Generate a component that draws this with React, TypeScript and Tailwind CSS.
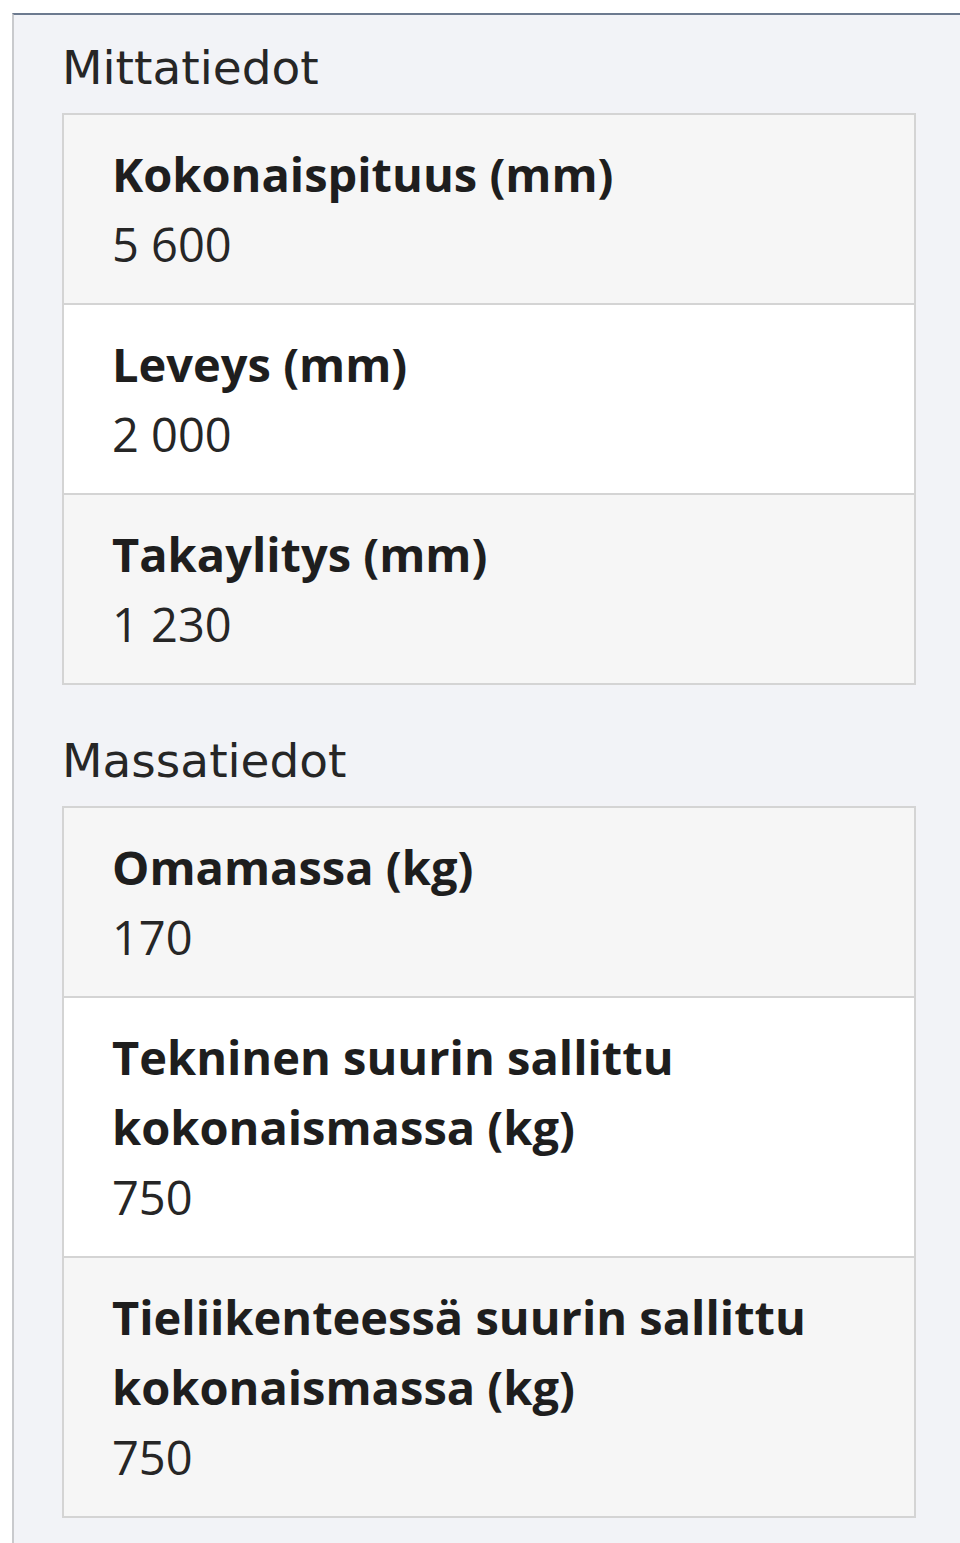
const sections = [
  {
    title: 'Mittatiedot',
    rows: [
      { label: 'Kokonaispituus (mm)', value: '5 600' },
      { label: 'Leveys (mm)', value: '2 000' },
      { label: 'Takaylitys (mm)', value: '1 230' },
    ],
  },
  {
    title: 'Massatiedot',
    rows: [
      { label: 'Omamassa (kg)', value: '170' },
      { label: 'Tekninen suurin sallittu kokonaismassa (kg)', value: '750' },
      { label: 'Tieliikenteessä suurin sallittu kokonaismassa (kg)', value: '750' },
    ],
  },
];

export default function App() {
  return (
    <div className="w-[960px] h-[1543px] overflow-hidden bg-white pt-[13px]">
      <div className="h-full ml-[12px] bg-[#f2f3f7] border-t-2 border-l-2 border-t-[#6c7a8f] border-l-[#c9cacd] pl-[48px] pr-[44px] pt-[23px] font-['Open_Sans',sans-serif] text-[#222]">
        {sections.map((section, i) => (
          <div key={section.title} className={i > 0 ? 'mt-[46px]' : ''}>
            <h2 className="font-['DejaVu_Sans',sans-serif] text-[47px] leading-[60px] font-normal text-[#262626] mb-[15px]">
              {section.title}
            </h2>
            <div className="border-2 border-[#d4d4d4]">
              {section.rows.map((row, j) => (
                <div
                  key={row.label}
                  className={`pl-[48px] pr-[100px] pt-[24px] pb-[24px] text-[47px] leading-[70px] ${
                    j > 0 ? 'border-t-2 border-[#d4d4d4]' : ''
                  } ${j % 2 === 0 ? 'bg-[#f6f6f6]' : 'bg-white'}`}
                >
                  <div className="font-bold text-[#1e1e1e]">{row.label}</div>
                  <div className="font-normal text-[#262626]">{row.value}</div>
                </div>
              ))}
            </div>
          </div>
        ))}
      </div>
    </div>
  );
}
